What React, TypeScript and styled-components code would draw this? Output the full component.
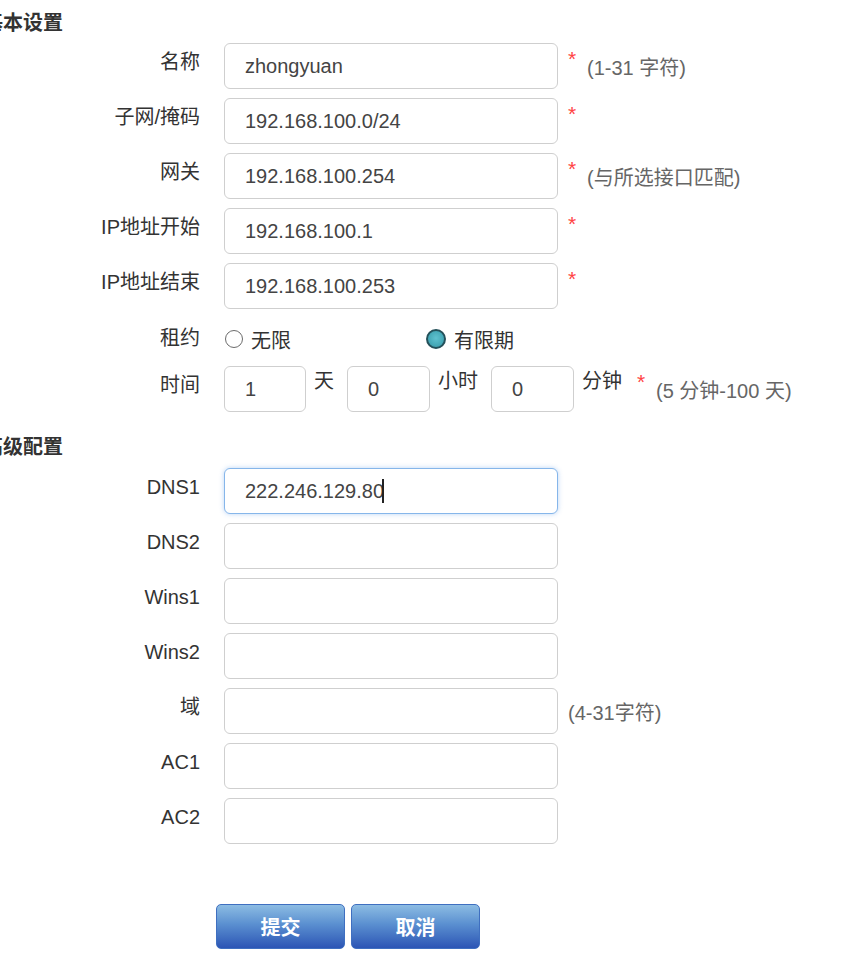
import React from "react";
import styled, { createGlobalStyle, css } from "styled-components";

const GlobalStyle = createGlobalStyle`
  html, body { margin: 0; padding: 0; background: #fff; }
  body { font-family: "Liberation Sans", "Noto Sans CJK SC", sans-serif; color: #333; overflow: hidden; }
  * { box-sizing: border-box; }
`;

const Page = styled.div`
  width: 865px;
  height: 977px;
  padding-top: 11px;
  overflow: hidden;
`;

const SectionTitle = styled.h2<{ $first?: boolean }>`
  margin: ${(p) => (p.$first ? "0" : "23px")} 0 ${(p) => (p.$first ? 8 : 9)}px -17px;
  font-size: 20px;
  line-height: 24px;
  font-weight: bold;
  color: #333;
`;

const Rows = styled.div`
  display: flex;
  flex-direction: column;
  gap: 9px;
`;

const Row = styled.div<{ $height?: number }>`
  display: flex;
  align-items: flex-start;
  height: ${(p) => p.$height ?? 46}px;
`;

const Label = styled.div<{ $top?: number }>`
  width: 200px;
  margin-right: 24px;
  padding-top: ${(p) => p.$top ?? 7}px;
  text-align: right;
  font-size: 20px;
  line-height: 24px;
  color: #333;
  flex-shrink: 0;
  white-space: nowrap;
`;

const InputWrap = styled.div`
  position: relative;
  flex-shrink: 0;
`;

const Caret = styled.span`
  position: absolute;
  left: 158px;
  top: 11px;
  width: 2px;
  height: 24px;
  background: #222;
`;

const TextInput = styled.input<{ $width?: number; $focused?: boolean }>`
  display: block;
  width: ${(p) => p.$width ?? 334}px;
  height: 46px;
  padding: 0 0 0 20px;
  border: 1px solid #cfcfcf;
  border-radius: 6px;
  font-family: "Liberation Sans", "Noto Sans CJK SC", sans-serif;
  font-size: 20px;
  color: #444;
  background: #fff;
  outline: none;
  flex-shrink: 0;
  ${(p) =>
    p.$focused &&
    css`
      border-color: #86b6ea;
      box-shadow: 0 0 5px rgba(102, 160, 233, 0.45);
    `}
`;

const Extra = styled.div<{ $gap?: number }>`
  display: flex;
  align-items: center;
  height: 46px;
  margin-left: ${(p) => p.$gap ?? 10}px;
`;

const Req = styled.span<{ $left?: number }>`
  align-self: flex-start;
  margin-top: 8px;
  margin-left: ${(p) => p.$left ?? 0}px;
  color: #f44;
  font-size: 21px;
  line-height: 16px;
  width: 10px;
`;

const Hint = styled.span`
  margin-left: 9px;
  font-size: 20px;
  color: #666;
  white-space: nowrap;
`;

const PlainHint = styled(Hint)`
  margin-left: 0;
`;

const RadioGroup = styled.div`
  display: flex;
  align-items: center;
  height: 39px;
  padding-top: 3px;
`;

const Option = styled.label<{ $width?: number }>`
  display: flex;
  align-items: center;
  gap: 8px;
  width: ${(p) => (p.$width ? `${p.$width}px` : "auto")};
  font-size: 20px;
  color: #333;
`;

const Radio = styled.input`
  appearance: none;
  margin: 0 0 0 1px;
  width: 18px;
  height: 18px;
  border-radius: 50%;
  border: 1.5px solid #6b6b6b;
  background: #fff;
  &:checked {
    width: 20px;
    height: 20px;
    margin-left: 0;
    border: 2px solid #24505a;
    background: radial-gradient(circle at 50% 45%, #5fc1cf 0%, #45a9b8 60%, #3a93a1 100%);
  }
`;

const Unit = styled.span<{ $after?: number }>`
  align-self: flex-start;
  padding-top: 3px;
  margin: 0 ${(p) => p.$after ?? 13}px 0 8px;
  font-size: 20px;
  line-height: 24px;
  color: #333;
  white-space: nowrap;
`;

const Buttons = styled.div`
  display: flex;
  gap: 6px;
  margin: 60px 0 0 216px;
`;

const Button = styled.button`
  width: 129px;
  height: 45px;
  border: 1px solid #3f6fc0;
  border-radius: 5px;
  background: linear-gradient(to bottom, #8cbce3 0%, #5a8fd0 45%, #2c55b5 100%);
  color: #fff;
  font-family: "Liberation Sans", "Noto Sans CJK SC", sans-serif;
  font-size: 20px;
  font-weight: bold;
  cursor: pointer;
`;

type FieldProps = {
  label: string;
  value?: string;
  required?: boolean;
  hint?: string;
  focused?: boolean;
};

const Field: React.FC<FieldProps> = ({ label, value, required, hint, focused }) => (
  <Row>
    <Label>{label}</Label>
    <InputWrap>
      <TextInput defaultValue={value ?? ""} $focused={focused} />
      {focused && <Caret />}
    </InputWrap>
    {(required || hint) && (
      <Extra>
        {required && <Req>*</Req>}
        {hint && (required ? <Hint>{hint}</Hint> : <PlainHint>{hint}</PlainHint>)}
      </Extra>
    )}
  </Row>
);

export default function App() {
  return (
    <>
      <GlobalStyle />
      <Page>
        <SectionTitle $first>基本设置</SectionTitle>
        <Rows>
          <Field label="名称" value="zhongyuan" required hint="(1-31 字符)" />
          <Field label="子网/掩码" value="192.168.100.0/24" required />
          <Field label="网关" value="192.168.100.254" required hint="(与所选接口匹配)" />
          <Field label="IP地址开始" value="192.168.100.1" required />
          <Field label="IP地址结束" value="192.168.100.253" required />
          <Row $height={39}>
            <Label $top={8}>租约</Label>
            <RadioGroup>
              <Option $width={202}>
                <Radio type="radio" name="lease" value="unlimited" />
                无限
              </Option>
              <Option>
                <Radio type="radio" name="lease" value="limited" defaultChecked />
                有限期
              </Option>
            </RadioGroup>
          </Row>
          <Row>
            <Label>时间</Label>
            <TextInput $width={82} defaultValue="1" />
            <Unit>天</Unit>
            <TextInput $width={83} defaultValue="0" />
            <Unit>小时</Unit>
            <TextInput $width={83} defaultValue="0" />
            <Unit $after={0}>分钟</Unit>
            <Extra $gap={0}>
              <Req $left={15}>*</Req>
              <Hint>(5 分钟-100 天)</Hint>
            </Extra>
          </Row>
        </Rows>

        <SectionTitle>高级配置</SectionTitle>
        <Rows>
          <Field label="DNS1" value="222.246.129.80" focused />
          <Field label="DNS2" />
          <Field label="Wins1" />
          <Field label="Wins2" />
          <Field label="域" hint="(4-31字符)" />
          <Field label="AC1" />
          <Field label="AC2" />
        </Rows>

        <Buttons>
          <Button type="button">提交</Button>
          <Button type="button">取消</Button>
        </Buttons>
      </Page>
    </>
  );
}
